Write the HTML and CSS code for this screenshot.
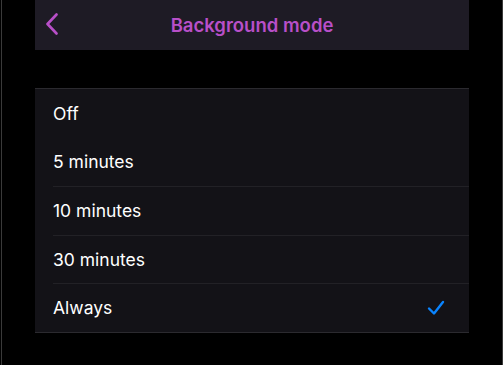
FILE: index.html
```html
<!DOCTYPE html>
<html>
<head>
<meta charset="utf-8">
<link rel="stylesheet" href="styles.css">
</head>
<body>
<div class="frame">
  <div class="screen">
    <header class="navbar">
      <button class="back" aria-label="Back">
        <svg width="14" height="22" viewBox="0 0 14 22"><path d="M11.5 1.5 L2.5 11 L11.5 20.5" fill="none" stroke="#b84fc8" stroke-width="2.6" stroke-linecap="round" stroke-linejoin="round"/></svg>
      </button>
      <h1 class="title">Background mode</h1>
    </header>
    <ul class="list">
      <li class="row nosep"><span>Off</span></li>
      <li class="row nosep"><span>5 minutes</span></li>
      <li class="row"><span>10 minutes</span></li>
      <li class="row"><span>30 minutes</span></li>
      <li class="row"><span>Always</span>
        <svg class="check" width="18" height="16" viewBox="0 0 18 16"><path d="M2 8.5 L7 13.5 L16 2" fill="none" stroke="#0a84ff" stroke-width="2.4" stroke-linecap="round" stroke-linejoin="round"/></svg>
      </li>
    </ul>
  </div>
</div>
</body>
</html>
```
FILE: styles.css
```css
html, body {
  margin: 0;
  padding: 0;
  background: #000;
  height: 100%;
}
body {
  font-family: Inter, "Noto Sans", sans-serif;
  color: #fff;
}
.frame {
  height: 365px;
  border-left: 1px solid #3a3a3a;
  border-right: 1px solid #3a3a3a;
  margin: 0 0 0 1px;
  width: 500px;
}
.screen {
  width: 434px;
  margin-left: 33px;
}
.navbar {
  height: 50px;
  background: #1e1b25;
  display: flex;
  align-items: center;
  justify-content: center;
  position: relative;
}
.back {
  position: absolute;
  left: 10px;
  top: 13px;
  background: none;
  border: 0;
  padding: 0;
  line-height: 0;
}
.title {
  margin: 0;
  font-size: 18.5px;
  font-weight: 600;
  color: #b84fc8;
}
.list {
  list-style: none;
  margin: 38px 0 0;
  padding: 0 0 0 18px;
  background: #131217;
  border-top: 1px solid #2b2a2f;
  border-bottom: 1px solid #2b2a2f;
}
.row {
  box-sizing: border-box;
  height: 48.5px;
  display: flex;
  align-items: center;
  justify-content: space-between;
  padding-right: 24px;
  border-top: 1px solid #222126;
  font-size: 17.5px;
}
.row.nosep {
  border-top: 0;
}
.check {
  display: block;
}
```
